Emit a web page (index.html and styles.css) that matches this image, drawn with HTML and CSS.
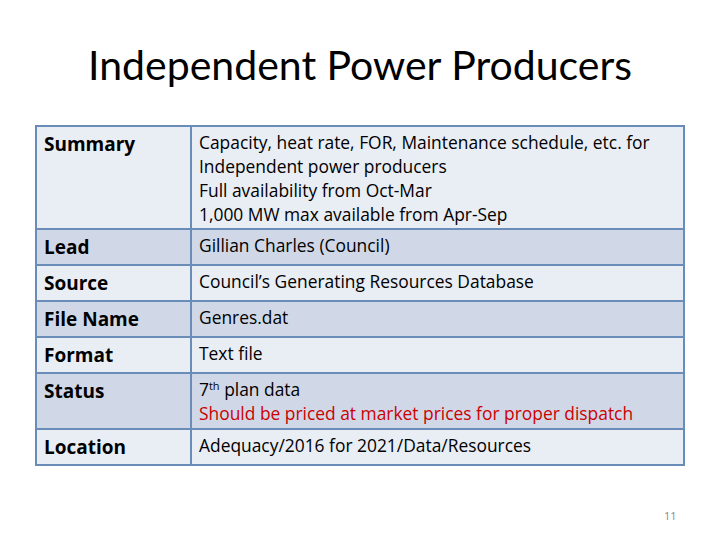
FILE: index.html
```html
<!DOCTYPE html>
<html>
<head>
<meta charset="utf-8">
<link rel="stylesheet" href="styles.css">
</head>
<body>
<div class="slide">
  <h1 class="title">Independent Power Producers</h1>
  <table class="info">
    <tr class="light tall">
      <th>Summary</th>
      <td>Capacity, heat rate, FOR, Maintenance schedule, etc. for<br>Independent power producers<br>Full availability from Oct-Mar<br>1,000 MW max available from Apr-Sep</td>
    </tr>
    <tr class="dark">
      <th>Lead</th>
      <td>Gillian Charles (Council)</td>
    </tr>
    <tr class="light">
      <th>Source</th>
      <td>Council’s Generating Resources Database</td>
    </tr>
    <tr class="dark">
      <th>File Name</th>
      <td>Genres.dat</td>
    </tr>
    <tr class="light">
      <th>Format</th>
      <td>Text file</td>
    </tr>
    <tr class="dark">
      <th>Status</th>
      <td>7<sup>th</sup> plan data<br><span class="warn">Should be priced at market prices for proper dispatch</span></td>
    </tr>
    <tr class="light">
      <th>Location</th>
      <td>Adequacy/2016 for 2021/Data/Resources</td>
    </tr>
  </table>
  <div class="page-num">11</div>
</div>
</body>
</html>
```
FILE: styles.css
```css
html, body {
  margin: 0;
  padding: 0;
  background: #ffffff;
}
.slide {
  width: 720px;
  height: 540px;
  position: relative;
  font-family: "Open Sans", Lato, sans-serif;
  color: #000;
  display: flex;
  flex-direction: column;
  align-items: flex-start;
}
.title {
  margin: 39px 0 0 0;
  width: 720px;
  text-align: center;
  font-family: Lato, "Open Sans", sans-serif;
  font-weight: 400;
  font-size: 41px;
  line-height: 52px;
}
.info {
  margin: 34px 0 0 35px;
  width: 650px;
  border-collapse: collapse;
  border: 2px solid #5b80ad;
}
.info th, .info td {
  border: 2px solid #6a8cb8;
  vertical-align: top;
  text-align: left;
  padding: 0 7px;
}
.info th {
  width: 139px;
  font-weight: 700;
  font-size: 19px;
  line-height: 26px;
  padding-top: 4px;
  padding-bottom: 4px;
}
.info td {
  font-size: 17.4px;
  line-height: 24px;
  padding-top: 3px;
  padding-bottom: 3px;
}
.tall td { padding-bottom: 2px; }
.light th, .light td { background: #e9edf4; }
.dark th, .dark td { background: #d0d8e8; }
.info sup {
  font-size: 11px;
  line-height: 0;
  vertical-align: 6px;
}
.warn { color: #cc0000; }
.page-num {
  position: absolute;
  left: 664px;
  top: 508px;
  font-size: 11px;
  color: #888;
}
```
